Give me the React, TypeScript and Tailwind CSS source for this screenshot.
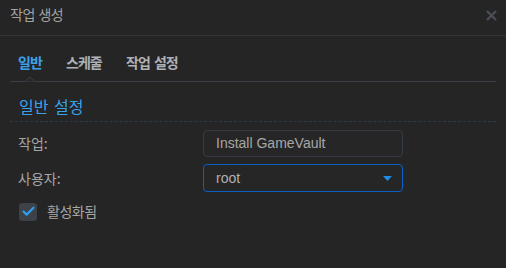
import { Check } from "lucide-react";

const FONT = { fontFamily: "'Noto Sans CJK KR', 'Noto Sans', sans-serif" };

export default function App() {
  return (
    <div className="w-[506px] h-[268px] bg-[#252525] overflow-hidden" style={FONT}>
      {/* header */}
      <div className="h-[36px] flex items-start justify-between pl-[10px] pr-[9px] pt-[4px] border-b border-[#343434]">
        <span className="text-[14px] text-[#a3a3a3] tracking-[-0.5px] [word-spacing:1px]">작업 생성</span>
        <svg width="11" height="11" viewBox="0 0 11 11" className="mt-[6px]">
          <path d="M1 1L10 10M10 1L1 10" stroke="#4b5057" strokeWidth="2.2" />
        </svg>
      </div>

      <div className="px-[10px]">
        {/* tabs */}
        <div className="relative h-[46px] flex items-end pl-[8px] pb-[8px] border-b border-[#3a3e44]">
          <span className="w-[48px] text-[14px] font-bold text-[#3aa3ea] tracking-[-1px]">일반</span>
          <span className="w-[60px] text-[14px] font-bold text-[#aeb1b5] tracking-[-1px]">스케줄</span>
          <span className="text-[14px] font-bold text-[#aeb1b5] tracking-[-1px] [word-spacing:2px]">작업 설정</span>
          <svg width="14" height="6" viewBox="0 0 14 6" className="absolute left-[13px] bottom-[-1px]">
            <path d="M0 5.5H2.5L7 1L11.5 5.5H14" fill="#252525" stroke="#3a3e44" strokeWidth="1" />
          </svg>
        </div>

        {/* section heading */}
        <div className="pl-[9px] pt-[12px] pb-[3px] border-b border-dashed border-[#2d3a47]">
          <span className="text-[16px] text-[#3aa3ea] [word-spacing:2px]">일반 설정</span>
        </div>

        {/* rows */}
        <div className="pl-[8px] pt-[8px] flex flex-col gap-[7px]">
          <div className="flex items-center">
            <span className="w-[185px] text-[14px] text-[#a5a5a5]">작업:</span>
            <div className="w-[200px] h-[27px] flex items-center px-[12px] rounded-[4px] border border-[#353b42] bg-[#262626]">
              <span className="text-[14px] text-[#a6a6a6]" style={{ fontFamily: "'Liberation Sans', sans-serif" }}>
                Install GameVault
              </span>
            </div>
          </div>
          <div className="flex items-center">
            <span className="w-[185px] text-[14px] text-[#a5a5a5]">사용자:</span>
            <div className="w-[200px] h-[28px] flex items-center justify-between pl-[12px] pr-[10px] rounded-[4px] border border-[#0b5fc6] bg-[#262626]">
              <span className="text-[14px] text-[#b0b0b0]" style={{ fontFamily: "'Liberation Sans', sans-serif" }}>
                root
              </span>
              <svg width="9" height="5" viewBox="0 0 9 5">
                <path d="M0 0H9L4.5 5Z" fill="#1f8ce6" />
              </svg>
            </div>
          </div>
          <div className="flex items-center gap-[10px] pl-[1px] mt-[2px]">
            <div className="w-[18px] h-[18px] rounded-[3px] bg-[#3d4248] flex items-center justify-center">
              <Check size={15} strokeWidth={3.4} color="#2e9ef0" />
            </div>
            <span className="text-[14px] text-[#a5a5a5] tracking-[-0.5px]">활성화됨</span>
          </div>
        </div>
      </div>
    </div>
  );
}
